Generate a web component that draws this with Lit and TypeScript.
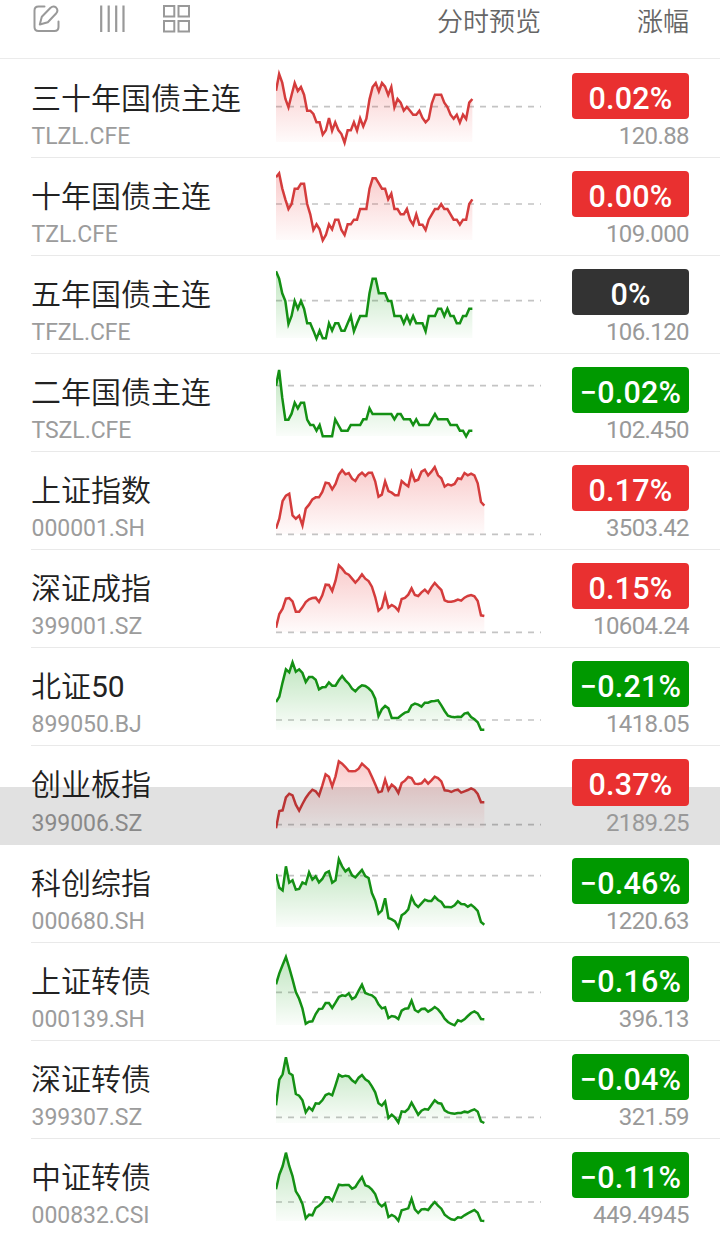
import { LitElement, html, css, svg } from "lit";
import { customElement, property } from "lit/decorators.js";
import { classMap } from "lit/directives/class-map.js";

type Tone = "up" | "down" | "flat";

interface Quote {
  name: string;
  digits?: string;
  code: string;
  pct: string;
  price: string;
  tone: Tone;
  line: "up" | "down";
  step: number;
  shift: number;
  base: number;
  ys: number[];
  pressed?: boolean;
}

const FUT = 9.35;
const IDX = 9.92;

// Chart samples are stored in thirds of a pixel; shift moves them to the row origin.
const QUOTES: Quote[] = [
  { name: "三十年国债主连", code: "TLZL.CFE", pct: "0.02%", price: "120.88", tone: "up", line: "up", step: FUT, shift: 3, base: 140,
    ys: [92,42,68,116,142,105,69,93,81,104,152,152,162,187,187,224,211,174,212,187,210,222,248,211,211,187,212,175,199,176,118,81,69,94,69,80,105,81,142,117,128,152,141,152,164,164,152,174,187,177,130,104,104,104,128,141,164,176,164,188,164,177,128,117] },
  { name: "十年国债主连", code: "TZL.CFE", pct: "0.00%", price: "109.000", tone: "up", line: "up", step: FUT, shift: -291, base: 432,
    ys: [352,340,385,418,447,432,386,386,371,371,432,463,510,493,508,541,525,493,508,479,479,510,525,493,493,479,479,447,447,447,386,355,355,370,386,386,418,401,447,447,463,463,447,479,494,463,494,494,510,479,463,447,447,432,447,447,463,479,479,494,479,479,432,418] },
  { name: "五年国债主连", code: "TFZL.CFE", pct: "0%", price: "106.120", tone: "flat", line: "down", step: FUT, shift: 3, base: 134,
    ys: [46,68,112,135,204,180,135,158,135,158,202,202,224,248,224,247,247,202,224,202,202,224,224,202,180,226,202,180,180,180,112,68,68,112,112,112,135,135,180,180,180,202,180,202,180,202,202,202,226,180,180,180,158,158,180,158,180,180,202,202,180,180,158,158] },
  { name: "二年国债主连", code: "TSZL.CFE", pct: "−0.02%", price: "102.450", tone: "down", line: "down", step: FUT, shift: -291, base: 389,
    ys: [389,342,425,491,491,473,440,457,440,440,491,507,507,524,507,541,541,541,541,490,507,524,524,524,507,507,507,507,490,490,457,474,474,474,474,474,474,474,490,474,474,490,490,490,507,490,507,507,507,507,490,474,490,490,490,490,507,507,507,524,524,541,524,524] },
  { name: "上证指数", code: "000001.SH", pct: "0.17%", price: "3503.42", tone: "up", line: "up", step: IDX, shift: 3, base: 247,
    ys: [230,200,147,131,125,190,200,191,220,170,158,142,136,136,120,92,94,112,96,68,54,67,63,80,87,70,62,72,62,62,88,134,128,88,117,122,130,130,87,96,103,60,87,83,59,53,70,59,45,70,79,104,97,100,96,79,81,63,70,65,70,94,150,161] },
  { name: "深证成指", code: "399001.SZ", pct: "0.15%", price: "10604.24", tone: "up", line: "up", step: IDX, shift: -291, base: 541,
    ys: [527,486,470,440,438,448,479,479,466,450,442,438,437,450,430,398,399,417,386,340,350,363,368,380,392,381,367,380,387,404,435,476,467,429,467,459,465,476,441,438,428,409,429,432,421,413,423,406,393,404,414,445,449,449,447,443,446,437,432,429,433,447,490,492] },
  { name: "北证", digits: "50", code: "899050.BJ", pct: "−0.21%", price: "1418.05", tone: "down", line: "down", step: IDX, shift: 3, base: 216,
    ys: [162,146,103,64,73,43,71,64,75,102,87,87,95,124,118,117,103,113,113,97,84,97,107,122,130,119,112,114,121,131,152,204,184,174,181,210,210,209,201,194,191,172,167,170,176,164,164,160,159,157,172,189,203,206,208,206,207,197,194,207,214,223,245,245] },
  { name: "创业板指", code: "399006.SZ", pct: "0.37%", price: "2189.25", tone: "up", line: "up", step: IDX, shift: -291, base: 530, pressed: true,
    ys: [541,489,487,448,437,442,470,488,468,450,436,425,430,443,413,379,386,415,385,340,347,357,369,370,369,362,347,356,365,386,409,433,430,395,426,410,418,435,405,398,387,390,407,408,406,395,407,397,386,390,400,427,428,432,427,425,434,430,426,421,426,438,463,463] },
  { name: "科创综指", code: "000680.SH", pct: "−0.46%", price: "1220.63", tone: "down", line: "down", step: IDX, shift: 6, base: 89,
    ys: [84,125,133,61,110,103,131,129,109,114,79,101,91,109,99,81,76,110,103,40,61,76,68,88,94,83,72,90,96,141,164,203,194,157,216,220,226,244,208,201,190,153,174,183,172,161,165,165,152,162,168,183,183,184,178,166,174,175,182,176,184,195,228,236] },
  { name: "上证转债", code: "000139.SH", pct: "−0.16%", price: "396.13", tone: "down", line: "down", step: IDX, shift: -288, base: 439,
    ys: [415,382,357,333,365,400,438,459,488,533,527,526,504,489,488,471,471,486,470,453,448,450,442,459,453,434,416,441,445,448,456,475,487,484,516,510,512,519,494,488,487,464,492,498,489,488,497,491,483,490,502,518,528,534,538,523,526,520,510,501,496,502,519,520] },
  { name: "深证转债", code: "399307.SZ", pct: "−0.04%", price: "321.59", tone: "down", line: "down", step: IDX, shift: 6, base: 226,
    ys: [190,113,97,46,93,100,156,161,175,211,196,205,184,185,175,159,155,160,130,98,104,101,103,115,122,107,99,112,118,133,151,184,191,179,228,218,227,241,208,210,201,182,200,218,206,201,203,189,175,183,185,205,211,214,215,213,213,209,211,206,202,209,238,243] },
  { name: "中证转债", code: "000832.CSI", pct: "−0.11%", price: "449.4945", tone: "down", line: "down", step: IDX, shift: -288, base: 480,
    ys: [442,398,373,332,372,402,448,464,486,529,518,520,498,491,482,466,466,476,452,428,430,429,429,440,435,419,405,430,434,443,456,484,493,485,525,519,524,536,505,502,499,470,502,513,502,501,504,491,480,491,500,518,526,532,534,526,527,520,514,509,504,512,536,537] },
];

@customElement("spark-line")
export class SparkLine extends LitElement {
  static styles = css`
    :host { display: block; width: 265px; height: 97px; }
    .chart { display: block; }
    .base { stroke: #c4c4c4; stroke-width: 1.7; stroke-dasharray: 6 6; }
    .line { fill: none; stroke-width: 2.5; stroke-linejoin: miter; }
    .up { stroke: #d43c3c; }
    .down { stroke: #149014; }
  `;

  @property({ attribute: false }) quote!: Quote;

  render() {
    const q = this.quote;
    const pts = q.ys.map((y, i) => [(i * q.step) / 3, (y + q.shift) / 3]);
    const top = Math.min(...pts.map((p) => p[1]));
    const path = pts.map((p) => `${p[0].toFixed(2)},${p[1].toFixed(2)}`).join(" ");
    const right = pts[pts.length - 1][0].toFixed(2);
    const base = (q.base + q.shift) / 3;
    const color = q.line === "up" ? "#e93030" : "#009900";
    return html`<svg class="chart" width="265" height="97" viewBox="0 0 265 97">
      ${svg`
        <defs>
          <linearGradient id="g" gradientUnits="userSpaceOnUse" x1="0" x2="0" y1=${top} y2="83">
            <stop offset="0" stop-color=${color} stop-opacity="0.25"></stop>
            <stop offset="1" stop-color=${color} stop-opacity="0.02"></stop>
          </linearGradient>
        </defs>
        <line class="base" x1="0" x2="265" y1=${base} y2=${base}></line>
        <polygon fill="url(#g)" points="0,83 ${path} ${right},83"></polygon>
        <polyline class=${"line " + q.line} points=${path}></polyline>`}
    </svg>`;
  }
}

@customElement("quote-row")
export class QuoteRow extends LitElement {
  static styles = css`
    :host { display: block; position: relative; }
    .row {
      box-sizing: border-box;
      height: 98px;
      display: grid;
      grid-template-columns: 245px 265px 1fr;
      margin-left: 31px;
      padding-right: 31px;
    }
    .row.divided { box-shadow: 0 1px 0 #e9e9e9; }
    .row.pressed { height: 99px; }
    .names { display: flex; flex-direction: column; padding-top: 21px; }
    .name { font: 350 30px/38px Roboto, "Noto Sans CJK SC", sans-serif; color: #222; white-space: nowrap; }
    .digits { font-weight: 400; }
    .code { font: 400 23px/28px Roboto, sans-serif; color: #9c9c9c; letter-spacing: -0.05px; padding: 5px 0 0 0.5px; }
    .row.pressed .code { padding-top: 6px; }
    .values { display: flex; flex-direction: column; align-items: flex-end; padding-top: 14px; }
    .badge {
      width: 117px;
      height: 46px;
      border-radius: 4px;
      color: #fff;
      font: 500 30.5px/51px Roboto, sans-serif;
      letter-spacing: 0.2px;
      text-align: center;
      white-space: nowrap;
    }
    .badge.up { background: #e93030; }
    .badge.down { background: #009900; }
    .badge.flat { background: #333; }
    .price { font: 400 24px/28px Roboto, sans-serif; color: #999; padding-top: 3px; letter-spacing: -0.6px; }
    .shade { position: absolute; left: 0; right: 0; top: 42px; bottom: -1px; background: rgba(0, 0, 0, 0.118); }
    .row.pressed .values { position: relative; z-index: 1; }
    .row.pressed .badge { height: 47px; }
  `;

  @property({ attribute: false }) quote!: Quote;
  @property({ type: Boolean }) last = false;

  render() {
    const q = this.quote;
    return html`
      <div class=${classMap({ row: true, divided: !this.last && !q.pressed, pressed: !!q.pressed })}>
        <div class="names">
          <div class="name">${q.name}${q.digits ? html`<span class="digits">${q.digits}</span>` : null}</div>
          <div class="code">${q.code}</div>
        </div>
        <spark-line .quote=${q}></spark-line>
        <div class="values">
          <div class=${"badge " + q.tone}>${q.pct}</div>
          <div class="price">${q.price}</div>
        </div>
      </div>
      ${q.pressed ? html`<div class="shade"></div>` : null}
    `;
  }
}

@customElement("app-root")
export class AppRoot extends LitElement {
  static styles = css`
    :host { display: block; height: 1235px; overflow: hidden; background: #fff; }
    .head {
      box-sizing: border-box;
      height: 59px;
      display: flex;
      align-items: flex-start;
      padding: 0 31px 0 32px;
      border-bottom: 1px solid #ebebeb;
      color: #666;
      font: 350 26px/40px "Noto Sans CJK SC", sans-serif;
    }
    .tools { display: flex; gap: 36px; padding-top: 4px; flex: 1; }
    .tool { display: block; fill: none; stroke: #999; stroke-width: 2; }
    .change { width: 148px; text-align: right; }
  `;

  render() {
    return html`
      <div class="head">
        <div class="tools">
          <svg class="tool" width="29" height="30" viewBox="0 0 29 30" stroke-linecap="round" stroke-linejoin="round">
            <path d="M12.500 2.500H6.500Q2.500 2.500 2.500 6.500V23Q2.500 27 6.500 27H22.500Q26.500 27 26.500 23V17.500"></path>
            <path d="M7.800 20.500L9.800 12.800L18.300 4Q21.300 1.200 24.100 3.600Q26.600 6.300 24.300 9.200L15.800 18.200Z"></path>
          </svg>
          <svg class="tool" width="29" height="30" viewBox="0 0 29 30">
            <path d="M4.200 1.500V28M11.700 1.500V28M19.200 1.500V28M26.500 1.500V28" stroke-width="2.200"></path>
          </svg>
          <svg class="tool" width="29" height="30" viewBox="0 0 29 30">
            <path d="M2 2H12.300V12.500H2ZM16.500 2H27V12.500H16.500ZM2 17H12.300V27.500H2ZM16.500 17H27V27.500H16.500Z"></path>
          </svg>
        </div>
        <div>分时预览</div>
        <div class="change">涨幅</div>
      </div>
      ${QUOTES.map((q, i) => html`<quote-row .quote=${q} ?last=${i === QUOTES.length - 1}></quote-row>`)}
    `;
  }
}
